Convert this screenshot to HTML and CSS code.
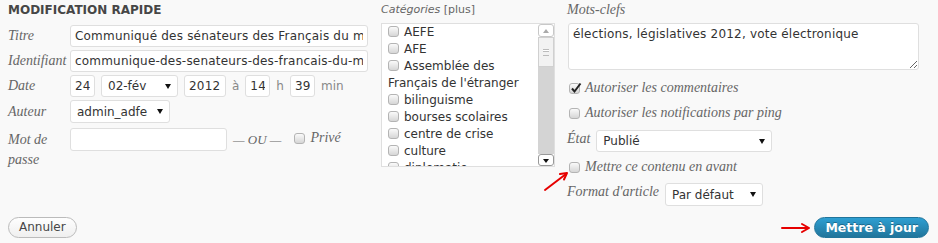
FILE: index.html
```html
<!DOCTYPE html>
<html lang="fr">

<head>
    <meta charset="UTF-8">
    <meta name="viewport" content="width=device-width, initial-scale=1.0">
    <title>Modification rapide</title>
    <link rel="stylesheet" href="styles.css">
</head>

<body>
    <div class="quick-edit">
        <div class="columns">
            <!-- left: title, slug, date, author, password -->
            <div class="col col-left">
                <h4 class="title">MODIFICATION RAPIDE</h4>

                <div class="row">
                    <span class="label">Titre</span>
                    <input class="text title-input" type="text" value="Communiqué des sénateurs des Français du monde">
                </div>

                <div class="row">
                    <span class="label">Identifiant</span>
                    <input class="text title-input" type="text" value="communique-des-senateurs-des-francais-du-monde">
                </div>

                <div class="row">
                    <span class="label">Date</span>
                    <div class="date">
                        <input class="text day" type="text" value="24">
                        <span class="select month">
                            <select>
                                <option>02-fév</option>
                            </select>
                        </span>
                        <input class="text year" type="text" value="2012">
                        <span class="unit">à</span>
                        <input class="text day" type="text" value="14">
                        <span class="unit">h</span>
                        <input class="text day" type="text" value="39">
                        <span class="unit">min</span>
                    </div>
                </div>

                <div class="row">
                    <span class="label">Auteur</span>
                    <span class="select author">
                        <select>
                            <option>admin_adfe</option>
                        </select>
                    </span>
                </div>

                <div class="row row-pass">
                    <span class="label">Mot de passe</span>
                    <input class="text pass" type="text" value="">
                    <span class="or">— OU —</span>
                    <label class="private"><span class="check"></span>Privé</label>
                </div>
            </div>

            <!-- middle: categories -->
            <div class="col col-middle">
                <div class="cat-label"><em>Catégories</em> [plus]</div>
                <div class="cat-box">
                    <ul class="cat-list">
                        <li><span class="check"></span>AEFE</li>
                        <li><span class="check"></span>AFE</li>
                        <li><span class="check"></span>Assemblée des Français de l'étranger</li>
                        <li><span class="check"></span>bilinguisme</li>
                        <li><span class="check"></span>bourses scolaires</li>
                        <li><span class="check"></span>centre de crise</li>
                        <li><span class="check"></span>culture</li>
                        <li><span class="check"></span>diplomatie</li>
                    </ul>
                    <div class="scrollbar">
                        <span class="sb-btn sb-up"></span>
                        <span class="sb-thumb"></span>
                        <span class="sb-track"></span>
                        <span class="sb-btn sb-down"></span>
                    </div>
                </div>
            </div>

            <!-- right: tags, options -->
            <div class="col col-right">
                <div class="side-label">Mots-clefs</div>
                <textarea class="tags">élections, législatives 2012, vote électronique</textarea>

                <label class="check-row first">
                    <span class="check checked">
                        <svg width="12" height="12" viewBox="0 0 12 12">
                            <path d="M2 6.5 L4.5 9.5 L10.5 1.5" fill="none" stroke="#222" stroke-width="2"/>
                        </svg>
                    </span>
                    Autoriser les commentaires
                </label>
                <label class="check-row">
                    <span class="check"></span>
                    Autoriser les notifications par ping
                </label>

                <div class="select-row status-row">
                    <span class="side-label inline">État</span>
                    <span class="select status">
                        <select>
                            <option>Publié</option>
                        </select>
                    </span>
                </div>

                <label class="check-row">
                    <span class="check"></span>
                    Mettre ce contenu en avant
                </label>

                <div class="select-row">
                    <span class="side-label inline">Format d'article</span>
                    <span class="select format">
                        <select>
                            <option>Par défaut</option>
                        </select>
                    </span>
                </div>
            </div>
        </div>

        <div class="actions">
            <button class="button cancel">Annuler</button>
            <button class="button primary">Mettre à jour</button>
        </div>

        <!-- red arrows drawn over the screenshot -->
        <svg class="arrows" width="938" height="243" viewBox="0 0 938 243">
            <g fill="none" stroke="#e60000" stroke-width="2" stroke-linecap="round" stroke-linejoin="round">
                <path d="M545 190 L566 174"/>
                <path d="M560 174 L567 173 L564 179.5"/>
                <path d="M782 228 L808 228"/>
                <path d="M802 224 L809 228 L802 232"/>
            </g>
        </svg>
    </div>
</body>

</html>
```

FILE: styles.css
```css
body {
    margin: 0;
    background-color: #f9f9f9;
    font-family: "DejaVu Sans", Verdana, sans-serif;
    font-size: 12px;
    color: #333;
}

.quick-edit {
    position: relative;
    width: 938px;
    height: 243px;
}

.columns {
    display: flex;
    align-items: flex-start;
    padding-left: 8px;
}

.col-left {
    width: 360px;
}

.col-middle {
    width: 174px;
    margin-left: 13px;
}

.col-right {
    width: 352px;
    margin-left: 12px;
}

.title {
    margin: 0;
    padding-top: 1px;
    font-size: 12px;
    line-height: 18px;
    font-weight: bold;
    color: #464646;
}

.row {
    display: flex;
    align-items: baseline;
    margin-top: 3px;
}

.title + .row {
    margin-top: 6px;
}

.row-pass {
    margin-top: 5px;
}

.label,
.side-label,
.or,
.private,
.check-row {
    font-family: "Liberation Serif", "Times New Roman", serif;
    font-style: italic;
    font-size: 14px;
    color: #666;
}

.label {
    width: 62px;
    flex-shrink: 0;
    line-height: 20px;
}

.text {
    height: 22px;
    box-sizing: border-box;
    border: 1px solid #dfdfdf;
    border-radius: 3px;
    background-color: #fff;
    padding: 0 4px;
    font-family: "DejaVu Sans", Verdana, sans-serif;
    font-size: 12px;
    letter-spacing: 0.2px;
    color: #333;
    outline: none;
}

.title-input {
    width: 298px;
}

.date {
    display: flex;
    align-items: center;
    gap: 6px;
}

.day {
    width: 25px;
}

.year {
    width: 42px;
}

.unit {
    color: #888;
}

.select {
    position: relative;
    display: inline-block;
}

.select select {
    appearance: none;
    -webkit-appearance: none;
    width: 100%;
    height: 22px;
    box-sizing: border-box;
    border: 1px solid #dfdfdf;
    border-radius: 3px;
    background-color: #fff;
    padding: 0 16px 0 6px;
    font-family: "DejaVu Sans", Verdana, sans-serif;
    font-size: 12px;
    color: #333;
}

.select::after {
    content: "";
    position: absolute;
    right: 7px;
    top: 9px;
    border-left: 3px solid transparent;
    border-right: 3px solid transparent;
    border-top: 5px solid #111;
}

.month {
    width: 77px;
}

.author {
    width: 100px;
}

.author select {
    height: 23px;
}

.pass {
    width: 157px;
    height: 23px;
}

.or {
    margin-left: 6px;
    font-size: 13px;
}

.private {
    display: flex;
    align-items: center;
    margin-left: 13px;
}

.check {
    position: relative;
    display: inline-block;
    width: 11px;
    height: 11px;
    box-sizing: border-box;
    border: 1px solid #b4b4b4;
    border-radius: 3px;
    background: linear-gradient(#fafafa, #d6d6d6);
    margin-right: 5px;
    flex-shrink: 0;
}

.check svg {
    position: absolute;
    left: 0;
    top: -2px;
}

/* categories */
.cat-label {
    font-size: 11px;
    line-height: 20px;
    color: #666;
}

.cat-box {
    display: flex;
    height: 144px;
    margin-top: 3px;
    box-sizing: border-box;
    border: 1px solid #dfdfdf;
    background-color: #fff;
}

.cat-list {
    flex: 1;
    overflow: hidden;
    list-style: none;
    margin: 0;
    padding: 0 0 0 6px;
    line-height: 17px;
    color: #333;
}

.cat-list .check {
    vertical-align: -1px;
}

.scrollbar {
    display: flex;
    flex-direction: column;
    width: 16px;
}

.sb-btn {
    position: relative;
    box-sizing: border-box;
    border: 1px solid #c8c8c8;
    border-radius: 3px;
    background-color: #fff;
}

.sb-up {
    height: 13px;
}

.sb-down {
    height: 12px;
    border-color: #999;
}

.sb-btn::after {
    content: "";
    position: absolute;
    left: 4px;
    border-left: 3px solid transparent;
    border-right: 3px solid transparent;
}

.sb-up::after {
    top: 4px;
    border-bottom: 4px solid #aaa;
}

.sb-down::after {
    top: 4px;
    border-top: 4px solid #111;
}

.sb-thumb {
    height: 30px;
    box-sizing: border-box;
    border: 1px solid #d0d0d0;
    background: #f2f2f2;
    display: flex;
    align-items: center;
    justify-content: center;
}

.sb-thumb::before {
    content: "";
    width: 6px;
    height: 5px;
    border-top: 1px solid #bbb;
    border-bottom: 1px solid #bbb;
    box-shadow: inset 0 2px 0 -1px #fff, inset 0 3px 0 -1px #bbb;
}

.sb-track {
    height: 87px;
    background-color: #d4d4d4;
}

/* right column */
.side-label {
    line-height: 20px;
}

.side-label.inline {
    line-height: 18px;
    margin-right: 6px;
}

.tags {
    display: block;
    width: 351px;
    height: 47px;
    margin: 3px 0 0 1px;
    box-sizing: border-box;
    border: 1px solid #dfdfdf;
    border-radius: 3px;
    background-color: #fff;
    padding: 3px 4px;
    font-family: "DejaVu Sans", Verdana, sans-serif;
    font-size: 12px;
    letter-spacing: 0.2px;
    color: #333;
    resize: vertical;
    outline: none;
}

.check-row {
    display: flex;
    align-items: center;
    line-height: 20px;
    margin-top: 5px;
    padding-left: 2px;
}

.check-row.first {
    margin-top: 8px;
}

.select-row {
    display: flex;
    align-items: flex-start;
    margin-top: 6px;
}

.status-row {
    margin-top: 7px;
}

.status {
    width: 176px;
}

.format {
    width: 98px;
}

.format select {
    height: 23px;
}

/* buttons */
.actions {
    display: flex;
    justify-content: space-between;
    margin-top: 11px;
    padding: 0 9px 0 8px;
}

.button {
    height: 21px;
    box-sizing: border-box;
    padding: 0 10px;
    border-radius: 11px;
    font-family: "DejaVu Sans", Verdana, sans-serif;
    font-size: 12px;
    line-height: 19px;
    cursor: pointer;
}

.cancel {
    border: 1px solid #bbb;
    background: linear-gradient(#fefefe, #efefef);
    color: #464646;
}

.primary {
    border: 1px solid #21759b;
    background: linear-gradient(#2e9fd2, #21759b);
    color: #fff;
    font-weight: bold;
    font-size: 12.5px;
    text-shadow: 0 -1px 0 rgba(0, 0, 0, 0.3);
}

.arrows {
    position: absolute;
    left: 0;
    top: 0;
    pointer-events: none;
}
```
